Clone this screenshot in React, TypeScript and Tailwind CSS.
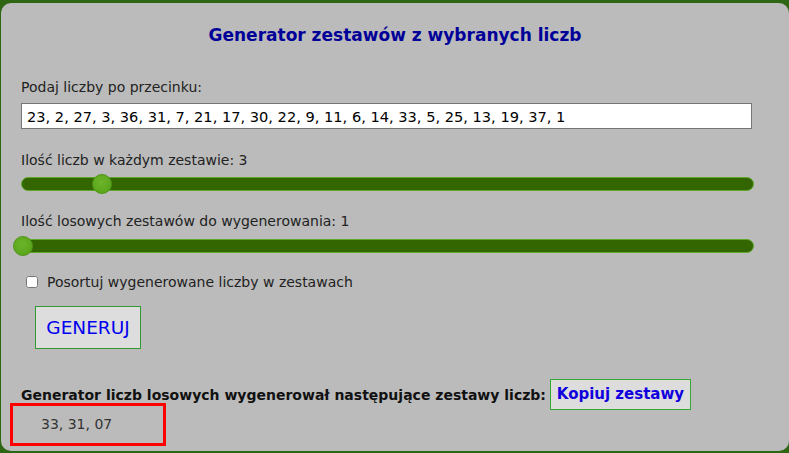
import React from "react";

const Slider = ({ value, min, max }: { value: number; min: number; max: number }) => {
  const pct = (value - min) / (max - min);
  return (
    <div className="relative h-[14px] w-[733px] rounded-full border border-[#5fa82a] bg-[#336600]">
      <div
        className="absolute top-1/2 h-[20px] w-[20px] -translate-y-1/2 rounded-full border border-[#4f9418] bg-[radial-gradient(circle_at_45%_40%,#6cb52a,#55a015)]"
        style={{ left: `calc(${pct} * (100% - 20px) - 9px)` }}
      />
    </div>
  );
};

export default function App() {
  const font = "font-['DejaVu_Sans',sans-serif]";
  return (
    <div className={`h-[453px] w-[789px] overflow-hidden bg-[#2f6614] pl-[1px] pt-[3px] ${font}`}>
      <div className="h-[448px] w-[788px] rounded-[10px] bg-[#bbbbbb] px-[20px] text-[#222]">
        <h1 className="pt-[21px] text-center text-[17px] font-bold leading-[22px] text-[#000099]">
          Generator zestawów z wybranych liczb
        </h1>

        <p className="mt-[32px] text-[14px] leading-[18px]">Podaj liczby po przecinku:</p>
        <input
          readOnly
          value="23, 2, 27, 3, 36, 31, 7, 21, 17, 30, 22, 9, 11, 6, 14, 33, 5, 25, 13, 19, 37, 1"
          className="mt-[7px] block h-[26px] w-[731px] border border-[#767676] bg-white px-[5px] text-[14.6px] text-black outline-none"
        />

        <p className="mt-[22px] text-[14px] leading-[18px]">Ilość liczb w każdym zestawie: 3</p>
        <div className="mt-[8px]">
          <Slider value={3} min={1} max={19} />
        </div>

        <p className="mt-[21px] text-[14px] leading-[18px]">Ilość losowych zestawów do wygenerowania: 1</p>
        <div className="mt-[9px]">
          <Slider value={1} min={1} max={20} />
        </div>

        <label className="mt-[20px] ml-[5px] flex items-center gap-[9px] text-[14px] leading-[18px]">
          <input type="checkbox" className="h-[12px] w-[12px] accent-white" />
          Posortuj wygenerowane liczby w zestawach
        </label>

        <button className="mt-[15px] ml-[14px] h-[43px] w-[106px] border border-[#339933] bg-[#dddddd] text-[18.5px] text-[#0000ee]">
          GENERUJ
        </button>

        <div className="mt-[30px] flex items-center gap-[4px]">
          <span className="text-[14px] font-bold leading-[18px] text-[#111]">
            Generator liczb losowych wygenerował następujące zestawy liczb:
          </span>
          <button className="h-[31px] w-[141px] border border-[#33aa33] bg-[#dddddd] text-[15px] font-bold text-[#1100dd]">
            Kopiuj zestawy
          </button>
        </div>
        <div className="-mt-[7px] -ml-[11px] h-[43px] w-[156px] border-[3px] border-[#ff0000] pl-[28px] pt-[9px] text-[14px] leading-[18px] text-[#333]">
          33, 31, 07
        </div>
      </div>
    </div>
  );
}
